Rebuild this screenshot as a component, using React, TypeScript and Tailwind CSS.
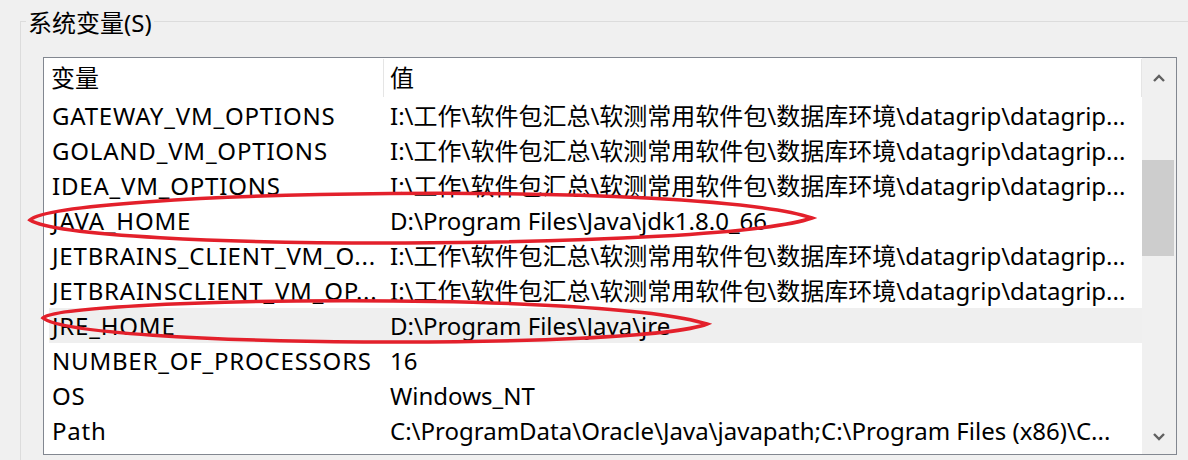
const DG = "I:\\工作\\软件包汇总\\软测常用软件包\\数据库环境\\datagrip\\datagrip...";

const rows: { name: string; value: string; selected?: boolean }[] = [
  { name: "GATEWAY_VM_OPTIONS", value: DG },
  { name: "GOLAND_VM_OPTIONS", value: DG },
  { name: "IDEA_VM_OPTIONS", value: DG },
  { name: "JAVA_HOME", value: "D:\\Program Files\\Java\\jdk1.8.0_66" },
  { name: "JETBRAINS_CLIENT_VM_O...", value: DG },
  { name: "JETBRAINSCLIENT_VM_OP...", value: DG },
  { name: "JRE_HOME", value: "D:\\Program Files\\Java\\jre", selected: true },
  { name: "NUMBER_OF_PROCESSORS", value: "16" },
  { name: "OS", value: "Windows_NT" },
  { name: "Path", value: "C:\\ProgramData\\Oracle\\Java\\javapath;C:\\Program Files (x86)\\C..." },
];

function Chevron({ down }: { down?: boolean }) {
  return (
    <svg width="12" height="8" viewBox="0 0 12 8" className={down ? "rotate-180" : ""}>
      <polyline points="1,7 6,2 11,7" fill="none" stroke="#606060" strokeWidth="2.4" />
    </svg>
  );
}

export default function App() {
  return (
    <div className="relative h-[460px] w-[1188px] overflow-hidden bg-[#f0f0f0] pl-[20px] pt-[21px] font-['Noto_Sans','Noto_Sans_CJK_SC',sans-serif] text-[24px] text-black">
      {/* group box */}
      <div className="h-[500px] w-[1200px] border border-[#dcdcdc]">
        <div className="-mt-[16px] ml-[5px] w-fit bg-[#f0f0f0] px-[2px] leading-[34px]">系统变量(S)</div>

        {/* list view */}
        <div className="ml-[22px] mt-[17px] flex h-[398px] w-[1134px] border border-[#828790] bg-white">
          <div className="flex w-[1098px] flex-col overflow-hidden">
            <div className="flex h-[40px] shrink-0 items-center">
              <div className="flex h-[38px] w-[340px] items-center border-r border-[#e5e5e5] pl-[7px]">变量</div>
              <div className="flex h-[38px] flex-1 items-center border-r border-[#e5e5e5] pl-[6px]">值</div>
            </div>
            {rows.map((r) => (
              <div
                key={r.name}
                className={`ml-[5px] flex h-[35px] shrink-0 items-center leading-[35px] ${r.selected ? "bg-[#efefef]" : ""}`}
              >
                <div className="w-[335px] overflow-hidden whitespace-nowrap pl-[3px] tracking-[0.8px]">{r.name}</div>
                <div className="flex-1 overflow-hidden whitespace-nowrap pl-[6px] pr-[10px]">{r.value}</div>
              </div>
            ))}
          </div>

          {/* scrollbar */}
          <div className="flex w-[34px] flex-col bg-[#f0f0f0]">
            <div className="flex h-[40px] items-center justify-center">
              <Chevron />
            </div>
            <div className="flex-1">
              <div className="mt-[62px] h-[96px] w-[32px] bg-[#cdcdcd]" />
            </div>
            <div className="flex h-[34px] items-center justify-center">
              <Chevron down />
            </div>
          </div>
        </div>
      </div>

      {/* red annotation marks */}
      <svg className="pointer-events-none absolute left-0 top-0" width="1188" height="460" viewBox="0 0 1188 460">
        <path d="M 30 220 C 60 190, 700 180, 812 218 C 720 250, 80 252, 30 220 Z" fill="none" stroke="#e3202b" strokeWidth="3.5" />
        <path d="M 43 318 C 60 298, 600 290, 707 324 C 640 350, 80 348, 43 318 Z" fill="none" stroke="#e3202b" strokeWidth="3.5" />
      </svg>
    </div>
  );
}
